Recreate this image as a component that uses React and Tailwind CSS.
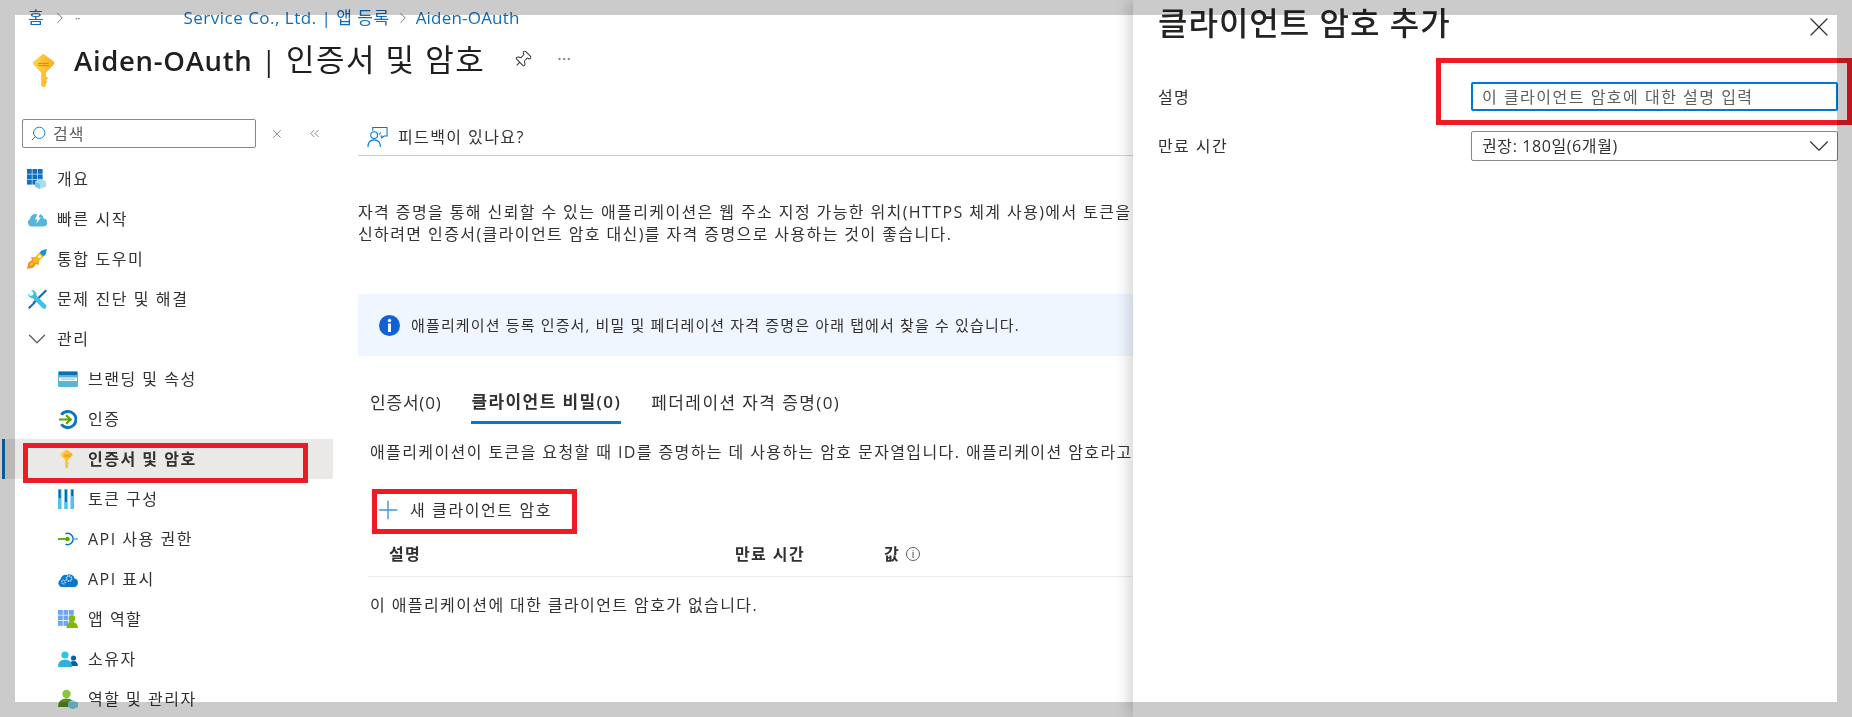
import { ChevronDown, ChevronRight, ChevronsLeft, Pin, X, Plus, Search, MoreHorizontal } from "lucide-react";

function KeyIcon({ id, className }) {
  return (
    <svg viewBox="0 0 24 36" className={className}>
      <defs>
        <linearGradient id={id} x1="0" y1="0" x2="1" y2="0">
          <stop offset="0" stopColor="#ffd84d" />
          <stop offset="1" stopColor="#f9ad1e" />
        </linearGradient>
      </defs>
      <path d="M12 0.5 22.5 8.5Q24 10 22.5 12L14.5 20V24L17 26 14.5 28 16 30 14.5 32V34Q12 36.5 9.5 34V20L1.5 12Q0 10 1.5 8.5Z" fill={`url(#${id})`} />
      <rect x="6.5" y="10" width="11" height="1.2" fill="#e08a10" />
      <rect x="6.5" y="12.2" width="11" height="1.2" fill="#e08a10" />
    </svg>
  );
}

function GridIcon() {
  return (
    <svg viewBox="0 0 19 20" className="w-[19px] h-[20px]">
      {[0, 5.4, 10.8].map((y) =>
        [0, 5.4, 10.8].map((x) => <rect key={`${x}-${y}`} x={x} y={y} width="4.8" height="4.8" fill="#0b6fc4" />)
      )}
      <path d="M13 9.5 19 12.5V17.5L13 20 8 17.5V12.5Z" fill="#a8dcee" />
      <path d="M8 12.5 13 15V20L8 17.5Z" fill="#7cc4e0" />
    </svg>
  );
}

function CloudBolt() {
  return (
    <svg viewBox="0 0 20 16" className="w-[20px] h-[16px]">
      <path d="M4.5 15.5A4 4 0 0 1 3 8 5 5 0 0 1 10 3.5 4.5 4.5 0 0 1 16.5 7.5 4 4 0 0 1 16 15.5Z" fill="#59b4d9" />
      <path d="M11.5 1 8 8.5H10.5L9 13 14 6.5H11.5L14 1Z" fill="#ffffff" />
    </svg>
  );
}

function Rocket() {
  return (
    <svg viewBox="0 0 20 20" className="w-[20px] h-[20px]">
      <path d="M0 20 1.5 13.5 5 11 4 8.5 8 8 12 12 11.5 16 9 15 6.5 18.5Z" fill="#f78d1e" />
      <path d="M3 17 4.5 13 7 15Z" fill="#ffd23f" />
      <path d="M6 14 5.5 10.5 12.5 3.5 16.5 3.5 16.5 7.5 9.5 14.5Z" fill="#fdb813" />
      <path d="M15 1.2 20 0 18.8 5 16.5 7.5 12.5 3.5Z" fill="#1f8fd6" />
      <circle cx="12.5" cy="7.5" r="1.6" fill="#ffffff" />
    </svg>
  );
}

function Tools() {
  return (
    <svg viewBox="0 0 20 20" className="w-[20px] h-[20px]">
      <path d="M18.5 0.5 20 2 7 15 5.5 13.5Z" fill="#0e6cb0" />
      <path d="M7 13 1 18.5 2.5 20 8.5 14Z" fill="#0e6cb0" />
      <path d="M1 4.5 3.5 7 6 6 6.5 3.5 4 1A5 5 0 0 1 9.5 6.5L19 16Q20 18 18.5 19.5 17 20.5 15.5 19L6 9.5A5 5 0 0 1 1 4.5Z" fill="#3bc1ea" />
    </svg>
  );
}

function WwwIcon() {
  return (
    <svg viewBox="0 0 20 16" className="w-[20px] h-[16px]">
      <rect width="20" height="16" rx="1" fill="#59b4d9" />
      <rect x="1" y="1" width="18" height="3" fill="#0a70b8" />
      <rect x="1" y="6.5" width="18" height="3.5" fill="#ffffff" />
      <rect x="3" y="7.5" width="14" height="1.5" fill="#a8d8ec" />
    </svg>
  );
}

function AuthIcon() {
  return (
    <svg viewBox="0 0 20 20" className="w-[19px] h-[19px]">
      <path d="M3.5 5A8.5 8.5 0 1 1 3.5 15" fill="none" stroke="#0b72c4" strokeWidth="3" />
      <path d="M1 10H13M8.5 5.5 13.5 10 8.5 14.5" fill="none" stroke="#57a300" strokeWidth="2.2" />
    </svg>
  );
}

function TokenIcon() {
  return (
    <svg viewBox="0 0 16 20" className="w-[16px] h-[20px]">
      <rect x="0" width="3.5" height="20" fill="#50c2ea" />
      <rect x="6.2" width="3.5" height="20" fill="#50c2ea" />
      <rect x="12.5" width="3.5" height="20" fill="#50c2ea" />
      <rect x="0.8" y="1" width="1.8" height="8" fill="#0a5f9e" />
      <rect x="7" y="1" width="1.8" height="12" fill="#0a5f9e" />
      <rect x="13.3" y="1" width="1.8" height="6" fill="#0a5f9e" />
    </svg>
  );
}

function ApiPerm() {
  return (
    <svg viewBox="0 0 20 14" className="w-[20px] h-[14px]">
      <path d="M7.5 1.8A5.6 5.6 0 1 1 7.5 12.2" fill="none" stroke="#0b72c4" strokeWidth="1.5" />
      <path d="M15 7H20" stroke="#59b4d9" strokeWidth="1.5" />
      <path d="M0 7H9" stroke="#57a300" strokeWidth="1.8" />
      <circle cx="9.5" cy="7" r="2.2" fill="#57a300" />
    </svg>
  );
}

function ApiCloud() {
  return (
    <svg viewBox="0 0 20 15" className="w-[20px] h-[15px]">
      <path d="M4 15A4 4 0 0 1 2.5 7.5 5 5 0 0 1 9 3 5 5 0 0 1 16.5 6.5 4.3 4.3 0 0 1 16 15Z" fill="#0b78d0" />
      <circle cx="11" cy="6.5" r="2.6" fill="none" stroke="#bfe3f7" strokeWidth="1.6" strokeDasharray="1.3 .7" />
      <circle cx="5.5" cy="10" r="1.8" fill="none" stroke="#bfe3f7" strokeWidth="1.3" strokeDasharray="1.1 .6" />
    </svg>
  );
}

function AppRoles() {
  return (
    <svg viewBox="0 0 20 18" className="w-[20px] h-[18px]">
      {[0, 5.5, 11].map((y) =>
        [0, 5.5, 11].map((x) => <rect key={`${x}-${y}`} x={x} y={y} width="4.8" height="4.8" fill="#6ea6ec" />)
      )}
      <circle cx="14" cy="8.5" r="3.2" fill="#7fba00" />
      <path d="M8.5 18Q8.5 12 14 12T20 18Z" fill="#7fba00" />
    </svg>
  );
}

function Owners() {
  return (
    <svg viewBox="0 0 20 16" className="w-[20px] h-[16px]">
      <circle cx="15.5" cy="7" r="2.6" fill="#0b5fa8" />
      <path d="M11.5 15Q11.5 10 15.5 10T20 15Z" fill="#0b5fa8" />
      <circle cx="7" cy="4" r="3.6" fill="#2fc3ec" />
      <path d="M0 16Q0 8.5 7 8.5T14 16Z" fill="#2fb1dc" />
    </svg>
  );
}

function RolesIcon() {
  return (
    <svg viewBox="0 0 20 20" className="w-[20px] h-[20px]">
      <circle cx="8.5" cy="5" r="4.2" fill="#8cc63f" />
      <path d="M0 18Q0 9.5 8.5 9.5T17 18Z" fill="#5a8a1e" />
      <path d="M14.5 11 20 13.5V18L14.5 20.5 10 18V13.5Z" fill="#7fd0e8" />
    </svg>
  );
}

function FeedbackIcon() {
  return (
    <svg viewBox="0 0 22 22" className="w-[21px] h-[22px]" fill="none" stroke="#0078d4" strokeWidth="1.1">
      <path d="M6 4.5V1H21V10H18L15.5 12V10H14" />
      <circle cx="7.5" cy="9" r="3.6" />
      <path d="M1 21.5Q1 14 7.5 14T14 21.5" />
      <path d="M14.5 6.5 12.5 8.5" />
    </svg>
  );
}

function InfoIcon() {
  return (
    <svg viewBox="0 0 21 21" className="w-[21px] h-[21px]">
      <circle cx="10.5" cy="10.5" r="10.5" fill="#0f62d6" />
      <circle cx="10.5" cy="5.5" r="1.7" fill="#ffffff" />
      <rect x="9" y="8.5" width="3" height="8.5" fill="#ffffff" />
    </svg>
  );
}

const menuTop = [
  { label: "개요", icon: <GridIcon /> },
  { label: "빠른 시작", icon: <CloudBolt /> },
  { label: "통합 도우미", icon: <Rocket /> },
  { label: "문제 진단 및 해결", icon: <Tools /> },
];

const menuManage = [
  { label: "브랜딩 및 속성", icon: <WwwIcon /> },
  { label: "인증", icon: <AuthIcon /> },
  { label: "인증서 및 암호", icon: <KeyIcon id="key-small" className="w-[13px] h-[20px] ml-[2px]" />, active: true },
  { label: "토큰 구성", icon: <TokenIcon /> },
  { label: "API 사용 권한", icon: <ApiPerm /> },
  { label: "API 표시", icon: <ApiCloud /> },
  { label: "앱 역할", icon: <AppRoles /> },
  { label: "소유자", icon: <Owners /> },
  { label: "역할 및 관리자", icon: <RolesIcon /> },
];

function Sidebar() {
  return (
    <aside className="w-[333px] shrink-0">
      <div className="flex items-center pl-[22px]">
        <div className="w-[234px] h-[29px] flex items-center gap-[6px] pl-[7px] border border-[#8a8886] rounded-[2px] text-[#605e5c]">
          <Search size={17} color="#0078d4" strokeWidth={1.3} className="-scale-x-100" />
          <span className="tracking-[1px]">검색</span>
        </div>
        <X size={14} color="#605e5c" strokeWidth={1.2} className="ml-[14px]" />
        <ChevronsLeft size={15} color="#605e5c" strokeWidth={1.2} className="ml-[23px]" />
      </div>
      <div className="mt-[11px] text-[#323130]">
        {menuTop.map((item) => (
          <div key={item.label} className="h-10 flex items-center pl-[27px]">
            <span className="w-[30px] flex items-center">{item.icon}</span>
            <span className="tracking-[1.6px]">{item.label}</span>
          </div>
        ))}
        <div className="h-10 flex items-center pl-[22px]">
          <ChevronDown size={30} color="#605e5c" strokeWidth={1} className="mr-[5px]" />
          <span className="tracking-[1.6px]">관리</span>
        </div>
        {menuManage.map((item) => (
          <div
            key={item.label}
            className={
              item.active
                ? "h-10 ml-[2px] flex items-center pl-[53px] bg-[#ebe9e8] border-l-[3px] border-[#0f6cbd] font-semibold"
                : "h-10 ml-[2px] flex items-center pl-[53px] border-l-[3px] border-transparent"
            }
          >
            <span className="w-[30px] flex items-center">{item.icon}</span>
            <span className="tracking-[1.5px]">{item.label}</span>
          </div>
        ))}
      </div>
    </aside>
  );
}

function SecretsContent() {
  return (
    <main className="flex-1 min-w-0 ml-[25px] overflow-hidden whitespace-nowrap text-[#323130]">
      <div className="h-[37px] flex items-center pl-[9px] gap-[10px] border-b border-[#d2d0ce]">
        <FeedbackIcon />
        <span className="tracking-[1.4px]">피드백이 있나요?</span>
      </div>
      <div className="mt-[45px] leading-[22px] tracking-[1.4px]">
        <p>자격 증명을 통해 신뢰할 수 있는 애플리케이션은 웹 주소 지정 가능한 위치(HTTPS 체계 사용)에서 토큰을</p>
        <p>신하려면 인증서(클라이언트 암호 대신)를 자격 증명으로 사용하는 것이 좋습니다.</p>
      </div>
      <div className="mt-[49px] h-[62px] flex items-center pl-[21px] gap-[11px] bg-[#eff6ff] text-[15px] tracking-[1.15px]">
        <InfoIcon />
        <span>애플리케이션 등록 인증서, 비밀 및 페더레이션 자격 증명은 아래 탭에서 찾을 수 있습니다.</span>
      </div>
      <div className="mt-[30px] flex pl-[12px] gap-[30px] tracking-[1.4px] text-[17px]">
        <div className="h-[38px] pb-[4px] flex items-center tracking-[.8px]">인증서(0)</div>
        <div className="h-[38px] pb-[4px] flex items-center font-semibold border-b-[3px] border-[#0078d4]">클라이언트 비밀(0)</div>
        <div className="h-[38px] pb-[4px] flex items-center">페더레이션 자격 증명(0)</div>
      </div>
      <p className="mt-[17px] pl-[12px] leading-[22px] tracking-[1.4px]">
        애플리케이션이 토큰을 요청할 때 ID를 증명하는 데 사용하는 암호 문자열입니다. 애플리케이션 암호라고
      </p>
      <div className="mt-[36px] h-[22px] flex items-center pl-[15px] tracking-[1.6px]">
        <Plus size={30} color="#3a96dd" strokeWidth={1.1} className="mr-[7px]" />
        <span>새 클라이언트 암호</span>
      </div>
      <div className="mt-[11px] ml-[10px] h-[45px] flex items-center font-semibold border-b border-[#edebe9] tracking-[1.4px]">
        <span className="w-[367px] pl-[21px] shrink-0">설명</span>
        <span className="w-[149px] shrink-0">만료 시간</span>
        <span>값</span>
        <span className="ml-[6px] w-[14px] h-[14px] rounded-full border border-[#605e5c] text-[10px] leading-[12px] text-center font-normal tracking-normal">i</span>
      </div>
      <p className="mt-[17px] pl-[12px] leading-[22px] tracking-[1.4px]">이 애플리케이션에 대한 클라이언트 암호가 없습니다.</p>
    </main>
  );
}

function AddSecretPanel() {
  return (
    <section className="relative flex-1 min-w-0 pl-[25px] bg-white shadow-[-6px_0_12px_rgba(0,0,0,0.14)] text-[#323130]">
      <div className="h-[54px] flex items-center justify-between pr-[17px]">
        <h2 className="-mt-[8px] text-[32px] font-medium tracking-[1px] leading-none text-[#252423]">클라이언트 암호 추가</h2>
        <X size={32} color="#323130" strokeWidth={0.9} />
      </div>
      <div className="mt-[28px] pr-[14px] grid grid-cols-[313px_1fr] items-center gap-y-[20px]">
        <span className="tracking-[1.4px]">설명</span>
        <div className="h-[29px] flex items-center pl-[9px] border-2 border-[#0078d4] rounded-[2px] text-[#605e5c] tracking-[1.5px]">이 클라이언트 암호에 대한 설명 입력</div>
        <span className="tracking-[1.4px]">만료 시간</span>
        <div className="h-[30px] flex items-center justify-between pl-[10px] pr-[1px] border border-[#8a8886] rounded-[2px] tracking-[.6px]">
          <span>권장: 180일(6개월)</span>
          <ChevronDown size={34} color="#323130" strokeWidth={0.8} className="-my-[4px]" />
        </div>
      </div>
    </section>
  );
}

export default function App() {
  return (
    <div className="relative w-[1852px] h-[717px] overflow-hidden flex bg-white text-[16px] font-[Open_Sans,Noto_Sans_CJK_KR,sans-serif]">
      <div className="w-[1133px] shrink-0 overflow-hidden">
        <nav className="h-[36px] flex items-center pl-[28px] text-[#0f6cbd] whitespace-nowrap text-[17px]">
          <span>홈</span>
          <ChevronRight size={18} color="#605e5c" strokeWidth={1.1} className="ml-[7px]" />
          <span className="ml-[6px] text-[#605e5c] text-[11px]">··</span>
          <span className="ml-[103px] tracking-[.5px]">Service Co., Ltd. | 앱 등록</span>
          <ChevronRight size={18} color="#605e5c" strokeWidth={1.1} className="ml-[4px]" />
          <span className="ml-[4px] tracking-[.2px]">Aiden-OAuth</span>
        </nav>
        <header className="h-[46px] flex items-center pl-[32px] whitespace-nowrap">
          <KeyIcon id="key-large" className="w-[23px] h-[35px] mt-[23px]" />
          <h1 className="ml-[19px] text-[27.5px] tracking-[.7px] text-[#201f1e]">
            <span className="font-semibold">Aiden-OAuth</span> <span className="ml-[1px]">|</span>{" "}
            <span className="ml-[1px] text-[31px] tracking-[1.5px]">인증서 및 암호</span>
          </h1>
          <Pin size={19} color="#323130" strokeWidth={1.2} className="ml-[28px] rotate-45" />
          <MoreHorizontal size={16} color="#605e5c" strokeWidth={1.2} className="ml-[24px]" />
        </header>
        <div className="mt-[37px] flex">
          <Sidebar />
          <SecretsContent />
        </div>
      </div>
      <AddSecretPanel />

      {/* red annotation boxes */}
      <div className="absolute left-[23px] top-[443px] w-[285px] h-[40px] border-[5px] border-[#ed1c24]" />
      <div className="absolute left-[372px] top-[489px] w-[205px] h-[45px] border-[5px] border-[#ed1c24]" />
      <div className="absolute left-[1436px] top-[58px] w-[416px] h-[67px] border-[5px] border-[#ed1c24]" />

      {/* gray frame of the screenshot, multiplied over whatever is under it */}
      <div className="absolute inset-0 border-[15px] border-[#cbcbcb] mix-blend-multiply pointer-events-none" />
    </div>
  );
}
